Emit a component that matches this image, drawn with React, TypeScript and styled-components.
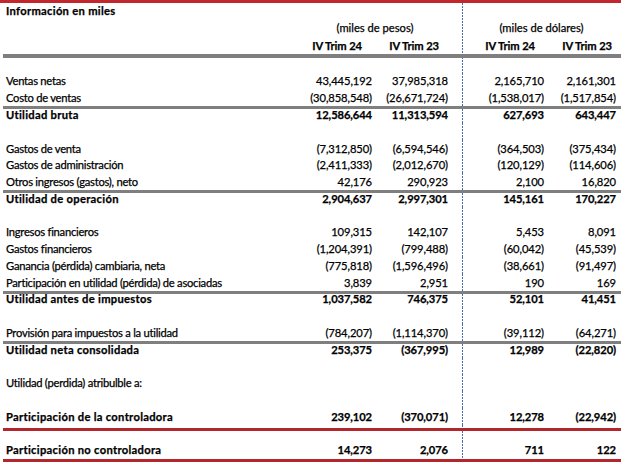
import React from "react";
import styled, { createGlobalStyle, css } from "styled-components";

const Global = createGlobalStyle`
  html, body { margin: 0; padding: 0; background: #fff; }
  body { font-family: Lato, "Open Sans", sans-serif; color: #000; }
`;

const COLS = "298px 78px 76px 10px 93px 66px";

const Sheet = styled.div`
  width: 621px;
  height: 464px;
  overflow: hidden;
  border-top: 3px solid #c1272d;
  box-sizing: border-box;
  font-size: 11.2px;
  -webkit-text-stroke: 0.25px #000;
`;

type LineKind = "gray" | "grayThick" | "red" | undefined;

const Row = styled.div<{ $h: number; $line?: LineKind; $lineOffset?: number; $bold?: boolean }>`
  position: relative;
  display: grid;
  grid-template-columns: ${COLS};
  height: ${(p) => p.$h}px;
  align-items: center;
  font-weight: ${(p) => (p.$bold ? 700 : 400)};
  ${(p) =>
    p.$line &&
    css`
      &::after {
        content: "";
        position: absolute;
        left: 3px;
        right: 0;
        top: calc(100% + ${p.$lineOffset ?? 0}px);
        height: ${p.$line === "grayThick" ? 4 : 3}px;
        background: ${p.$line === "red" ? "#b3262b" : "#7f7f7f"};
        z-index: 1;
      }
    `}
`;

const Label = styled.div<{ $bold?: boolean }>`
  padding-left: 6px;
  white-space: nowrap;
  letter-spacing: ${(p) => (p.$bold ? "0.3px" : "-0.25px")};
`;

const dividerCss = css`
  background-image: linear-gradient(to bottom, #4c6fb3 66%, transparent 66%);
  background-size: 1px 3px;
  background-repeat: repeat-y;
  background-position: left top;
`;

const Num = styled.div<{ $pr: number; $divider?: boolean }>`
  padding-right: ${(p) => p.$pr}px;
  white-space: nowrap;
  align-self: stretch;
  display: flex;
  align-items: center;
  justify-content: flex-end;
  letter-spacing: -0.1px;
  ${(p) => p.$divider && dividerCss}
`;

const Gap = styled.div``;

const Units = styled.div<{ $span: string; $divider?: boolean }>`
  grid-column: ${(p) => p.$span};
  align-self: stretch;
  display: flex;
  align-items: center;
  justify-content: center;
  ${(p) => p.$divider && dividerCss}
`;

type DataRow = {
  label?: string;
  v?: string[];
  bold?: boolean;
  line?: LineKind;
  lineOffset?: number;
};

const ROW_H = 16.77;

const rows: DataRow[] = [
  { label: "Ventas netas", v: ["43,445,192", "37,985,318", "2,165,710", "2,161,301"] },
  { label: "Costo de ventas", v: ["(30,858,548)", "(26,671,724)", "(1,538,017)", "(1,517,854)"], line: "gray" },
  { label: "Utilidad bruta", bold: true, v: ["12,586,644", "11,313,594", "627,693", "643,447"] },
  {},
  { label: "Gastos de venta", v: ["(7,312,850)", "(6,594,546)", "(364,503)", "(375,434)"] },
  { label: "Gastos de administración", v: ["(2,411,333)", "(2,012,670)", "(120,129)", "(114,606)"] },
  { label: "Otros ingresos (gastos), neto", v: ["42,176", "290,923", "2,100", "16,820"], line: "gray" },
  { label: "Utilidad de operación", bold: true, v: ["2,904,637", "2,997,301", "145,161", "170,227"] },
  {},
  { label: "Ingresos financieros", v: ["109,315", "142,107", "5,453", "8,091"] },
  { label: "Gastos financieros", v: ["(1,204,391)", "(799,488)", "(60,042)", "(45,539)"] },
  { label: "Ganancia (pérdida) cambiaria, neta", v: ["(775,818)", "(1,596,496)", "(38,661)", "(91,497)"] },
  { label: "Participación en utilidad (pérdida) de asociadas", v: ["3,839", "2,951", "190", "169"], line: "gray" },
  { label: "Utilidad antes de impuestos", bold: true, v: ["1,037,582", "746,375", "52,101", "41,451"] },
  {},
  { label: "Provisión para impuestos a la utilidad", v: ["(784,207)", "(1,114,370)", "(39,112)", "(64,271)"], line: "gray" },
  { label: "Utilidad neta consolidada", bold: true, v: ["253,375", "(367,995)", "12,989", "(22,820)"] },
  {},
  { label: "Utilidad (perdida) atribulble a:" },
  {},
  { label: "Participación de la controladora", bold: true, v: ["239,102", "(370,071)", "12,278", "(22,942)"], line: "red", lineOffset: 3 },
  {},
  { label: "Participación no controladora", bold: true, v: ["14,273", "2,076", "711", "122"], line: "red", lineOffset: 1 },
];

const NUM_PAD = [4, 4, 11, 5];
const HEAD_PAD = [14, 13, 20, 9];

const Values: React.FC<{ v?: string[]; pads: number[] }> = ({ v, pads }) => (
  <>
    <Num $pr={pads[0]}>{v?.[0]}</Num>
    <Num $pr={pads[1]}>{v?.[1]}</Num>
    <Gap />
    <Num $pr={pads[2]} $divider>{v?.[2]}</Num>
    <Num $pr={pads[3]}>{v?.[3]}</Num>
  </>
);

export default function App() {
  return (
    <>
      <Global />
      <Sheet>
        <Row $h={15} $bold>
          <Label $bold>Información en miles</Label>
          <Values pads={HEAD_PAD} />
        </Row>
        <Row $h={18}>
          <Label />
          <Units $span="2 / 4">(miles de pesos)</Units>
          <Gap />
          <Units $span="5 / 7" $divider>(miles de dólares)</Units>
        </Row>
        <Row $h={18} $bold $line="grayThick">
          <Label />
          <Values v={["IV Trim 24", "IV Trim 23", "IV Trim 24", "IV Trim 23"]} pads={HEAD_PAD} />
        </Row>
        <Row $h={18.6}>
          <Label />
          <Values pads={NUM_PAD} />
        </Row>
        {rows.map((r, i) => (
          <Row key={i} $h={ROW_H} $bold={r.bold} $line={r.line} $lineOffset={r.lineOffset}>
            <Label $bold={r.bold}>{r.label}</Label>
            <Values v={r.v} pads={NUM_PAD} />
          </Row>
        ))}
      </Sheet>
    </>
  );
}
